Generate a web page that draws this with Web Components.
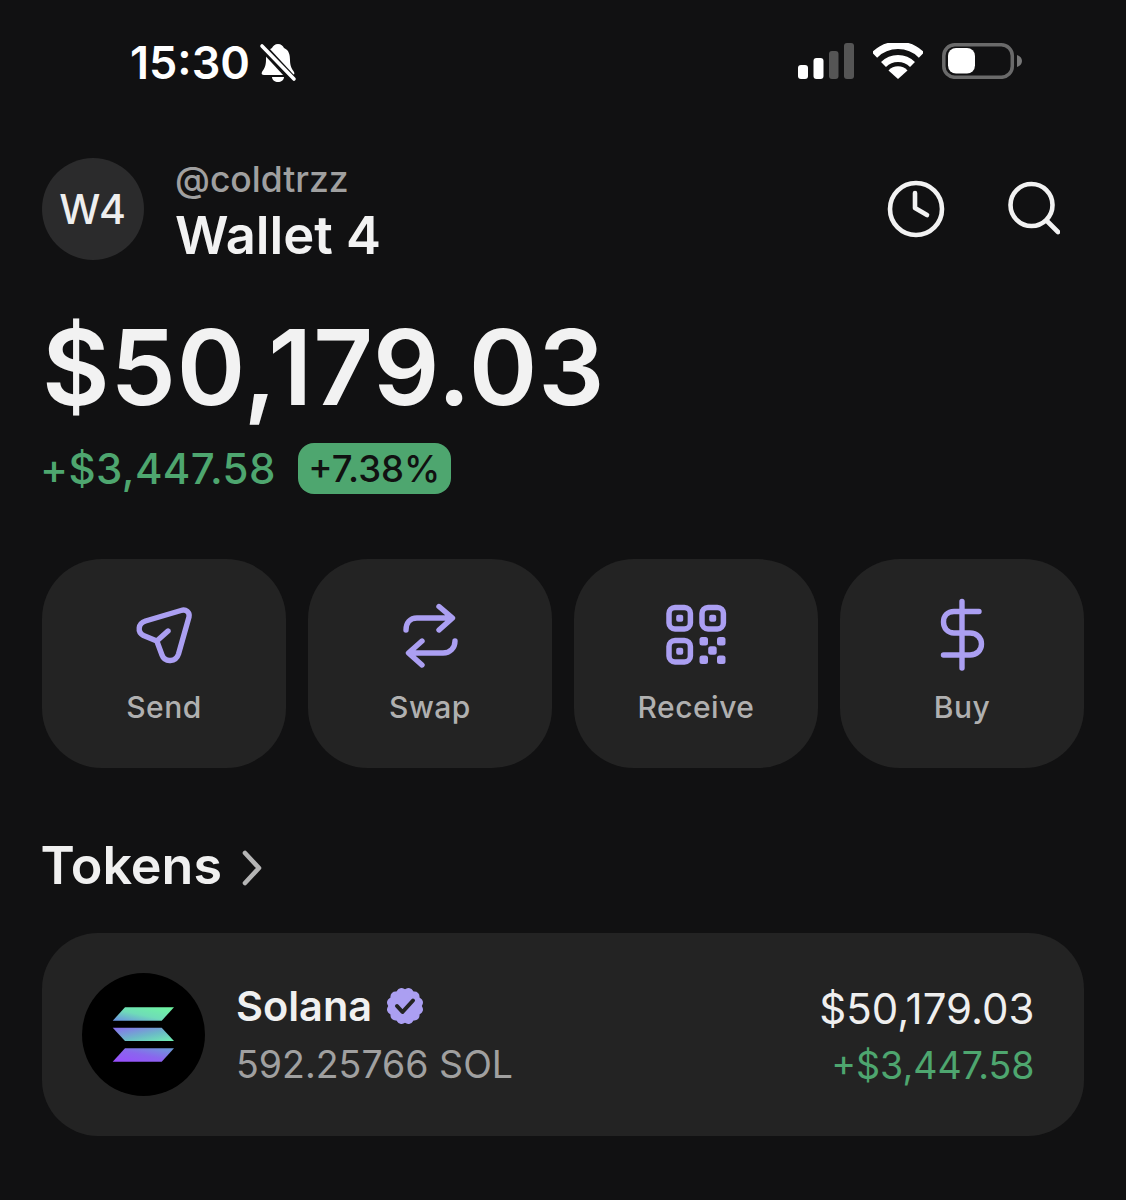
<!doctype html>
<html lang="en"><head><meta charset="utf-8"><title>Wallet 4</title>
<style>
html,body{margin:0;padding:0;background:#111112;}
body{font-family:Inter,"Liberation Sans",sans-serif;color:#f0f0f0;font-optical-sizing:none;font-variation-settings:"opsz" 14;}
wallet-app{height:1200px;}
</style></head><body>
<wallet-app>
  <status-bar></status-bar>
  <wallet-header handle="@coldtrzz" name="Wallet 4" initials="W4"></wallet-header>
  <balance-block amount="$50,179.03" change="+$3,447.58" pct="+7.38%"></balance-block>
  <action-row>
    <action-button label="Send" icon="send"></action-button>
    <action-button label="Swap" icon="swap"></action-button>
    <action-button label="Receive" icon="qr"></action-button>
    <action-button label="Buy" icon="dollar"></action-button>
  </action-row>
  <section-title>Tokens</section-title>
  <token-card name="Solana" qty="592.25766 SOL" value="$50,179.03" change="+$3,447.58"></token-card>
</wallet-app>
<script>
const def=(n,css,html,extra)=>customElements.define(n,class extends HTMLElement{
  constructor(){super();this.attachShadow({mode:'open'});}
  connectedCallback(){const a=k=>this.getAttribute(k)||'';this.shadowRoot.innerHTML='<style>'+css+'</style>'+html(a);}
});
def('wallet-app',':host{display:block;padding:0 42px;box-sizing:border-box;width:1126px}',()=>'<slot></slot>');

def('status-bar',`:host{display:flex;align-items:center;justify-content:space-between;height:39px;margin:43px 62px 0 88px;color:#fff}
.l{display:flex;align-items:center;gap:9px}.t{font-size:45px;font-weight:600;line-height:39px}
.r{display:flex;align-items:center;gap:19px;align-self:flex-start}svg{display:block}`,()=>`
<div class="l"><span class="t">15:30</span>
<svg width="38" height="40" viewBox="0 0 38 40"><path d="M19 1c3 0 5 2 6 4 5 2 6 7 6 12 0 6 2 9 4 12 1 2 0 3-2 3H5c-2 0-3-1-2-3 2-3 4-6 4-12 0-5 1-10 6-12 1-2 3-4 6-4z" fill="#fff"/><path d="M13 34h12c0 3-3 5-6 5s-6-2-6-5z" fill="#fff"/><path d="M-1 -1 36 39" stroke="#111112" stroke-width="8"/><path d="M3 3 35 36" stroke="#fff" stroke-width="3.6" stroke-linecap="round"/></svg></div>
<div class="r">
<svg width="56" height="36" viewBox="0 0 56 36"><rect x="0" y="22" width="10" height="14" rx="3" fill="#fff"/><rect x="15.500" y="15" width="10" height="21" rx="3" fill="#fff"/><rect x="31" y="8" width="9.500" height="28" rx="3" fill="#555"/><rect x="46" y="0" width="10" height="36" rx="3" fill="#555"/></svg>
<svg width="50" height="36" viewBox="-25 -36 50 36"><path d="M-23.500 -24A33.500 33.500 0 0 1 23.500 -24" fill="none" stroke="#fff" stroke-width="7.500"/><path d="M-14.500 -14.500A20.500 20.500 0 0 1 14.500 -14.500" fill="none" stroke="#fff" stroke-width="7"/><path d="M0 0-9.500 -8.500A13 13 0 0 1 9.500 -8.500Z" fill="#fff"/></svg>
<svg width="80" height="36" viewBox="0 0 80 36"><rect x="1.800" y="1.800" width="68.500" height="32.500" rx="11" fill="none" stroke="#6a6a6a" stroke-width="3.500"/><rect x="6" y="5" width="27" height="25.500" rx="8" fill="#fff"/><path d="M75 12c3 1 5 3 5 6s-2 5-5 6z" fill="#777"/></svg>
</div>`);

def('wallet-header',`:host{display:flex;align-items:center;margin-top:76px;height:102px}
.av{width:102px;height:102px;border-radius:50%;background:#2b2b2c;display:flex;align-items:center;justify-content:center;font-size:41px;font-weight:500;color:#eee;padding-right:1px;box-sizing:border-box}
.who{margin-left:31px;display:flex;flex-direction:column;padding-top:4px}
.h{font-size:35.500px;line-height:44px;color:#a0a0a0;font-weight:500;height:44px}
.n{font-size:52.500px;line-height:60px;font-weight:600;color:#f2f2f2;margin-top:3px}
.ic{margin-left:auto;display:flex;align-items:center;gap:59.500px;margin-right:24.500px}svg{display:block}`,a=>`
<div class="av">${a('initials')}</div>
<div class="who"><span class="h">${a('handle')}</span><span class="n">${a('name')}</span></div>
<div class="ic">
<svg width="60" height="60" viewBox="0 0 60 60" fill="none" stroke="#f2f2f2" stroke-width="4.600" stroke-linecap="round" stroke-linejoin="round"><circle cx="30" cy="30" r="26"/><path d="M29 14V29L41 36"/></svg>
<svg width="54" height="56" viewBox="0 0 54 56" fill="none" stroke="#f2f2f2" stroke-width="4.600" stroke-linecap="round"><circle cx="25.500" cy="24" r="21"/><path d="M41 40 52 51"/></svg>
</div>`);

def('balance-block',`:host{display:block;margin-top:46px}
.a{font-size:104px;line-height:122px;font-weight:600;color:#f2f2f2;height:122px;letter-spacing:.9px}
.row{display:flex;align-items:center;margin-top:15px;height:51px}
.c{font-size:42px;font-weight:500;color:#4ea66f;margin-left:-2px;letter-spacing:.4px}
.p{margin-left:22px;background:#4ea66f;color:#111;border-radius:16px;height:51px;width:153px;display:flex;align-items:center;justify-content:center;font-size:36.500px;font-weight:500}`,a=>`
<div class="a">${a('amount')}</div>
<div class="row"><span class="c">${a('change')}</span><span class="p">${a('pct')}</span></div>`);

def('action-row',':host{display:grid;grid-template-columns:repeat(4,244px);gap:22px;margin-top:65px}',()=>'<slot></slot>');

const icons={
send:`<svg width="60" height="60" viewBox="0 0 60 60" fill="none" stroke="#ab9ff2" stroke-width="5.400" stroke-linecap="round" stroke-linejoin="round" style="margin-top:-2px"><path d="M11.500 17 47 6.500C52 5 56 8 55 13L44.500 50C42 58 31 59 28 51L22.800 37 9.500 31.500C3 28 4 19.500 11.500 17Z"/><path d="M22.800 37 34 27"/></svg>`,
swap:`<svg width="60" height="70" viewBox="0 0 60 70" fill="none" stroke="#ab9ff2" stroke-width="5.400" stroke-linecap="round" stroke-linejoin="round"><path d="M6 30C6 23 10 18 17 18H52M39 6.500 52.500 18 39 30"/><path d="M55 41C55 48 50 53 43 53H9M22 41 8.500 53 22 65"/></svg>`,
qr:`<svg width="64" height="64" viewBox="0 0 64 64" fill="none" stroke="#ab9ff2" stroke-width="5.500"><rect x="5" y="4.500" width="21.400" height="21.400" rx="6"/><rect x="38" y="4.500" width="21.400" height="21.400" rx="6"/><rect x="5" y="37.500" width="21.400" height="21.400" rx="6"/><g fill="#ab9ff2" stroke="none"><rect x="12.200" y="11.700" width="7" height="7" rx="2"/><rect x="45.200" y="11.700" width="7" height="7" rx="2"/><rect x="12.200" y="44.700" width="7" height="7" rx="2"/><rect x="35.500" y="34" width="8.500" height="8.500" rx="2.500"/><rect x="53" y="34" width="8.500" height="8.500" rx="2.500"/><rect x="44.200" y="43.300" width="8.500" height="8.500" rx="2.500"/><rect x="35.500" y="52.500" width="8.500" height="8.500" rx="2.500"/><rect x="53" y="52.500" width="8.500" height="8.500" rx="2.500"/></g></svg>`,
dollar:`<svg width="56" height="78" viewBox="0 0 56 78" fill="none" stroke="#ab9ff2" stroke-width="5.400" stroke-linecap="round" stroke-linejoin="round"><path d="M45 15.500H20C13.500 15.500 9.500 20 9.500 26S13.500 37 20 37H36C43 37 47.500 42 47.500 48S43 59 36 59H9.500"/><path d="M28 5.500V72"/></svg>`};
def('action-button',`:host{display:flex;flex-direction:column;align-items:center;height:209px;background:#232323;border-radius:60px;box-sizing:border-box;padding-top:38px}
.i{height:76px;display:flex;align-items:center;justify-content:center}svg{display:block}
.l{margin-top:16px;font-size:30px;line-height:36px;font-weight:500;color:#b0b0b0;letter-spacing:.5px}`,a=>`
<div class="i">${icons[a('icon')]}</div><div class="l">${a('label')}</div>`);

def('section-title',`:host{display:flex;align-items:center;margin-top:67px;height:62px;font-size:52px;line-height:62px;font-weight:600;color:#f0f0f0;margin-left:-1.500px}
svg{display:block;margin:4px 0 0 20px}`,()=>`<slot></slot><svg width="20" height="36" viewBox="0 0 20 36" fill="none" stroke="#b5b5b5" stroke-width="4.600" stroke-linecap="round" stroke-linejoin="round"><path d="M3 3 17 18 3 33"/></svg>`);

def('token-card',`:host{display:flex;align-items:center;margin-top:36px;height:203px;background:#232323;border-radius:56px;padding:0 49.500px 0 40px;box-sizing:border-box}
svg{display:block;flex:none}
.m{margin-left:31px;display:flex;flex-direction:column;padding-top:4px}
.n{display:flex;align-items:center;gap:14px;font-size:41.500px;line-height:56px;font-weight:600;color:#f0f0f0}
.q{font-size:37.500px;line-height:62px;color:#a0a0a0}
.r{margin-left:auto;display:flex;flex-direction:column;align-items:flex-end;padding-top:6px}
.v{font-size:42px;line-height:56px;color:#efefef}
.c{font-size:37.500px;line-height:58px;color:#4ea66f;font-weight:400}`,a=>`
<svg width="123" height="123" viewBox="82 973 123 123"><defs>
<linearGradient id="g1" x1="0" y1="1" x2="1" y2="0"><stop offset="0" stop-color="#6a8fe2"/><stop offset=".45" stop-color="#6fdcb8"/><stop offset="1" stop-color="#6ff7a0"/></linearGradient>
<linearGradient id="g2" x1="0" y1="0" x2="1" y2="1"><stop offset="0" stop-color="#8a6af0"/><stop offset=".55" stop-color="#6cb8c8"/><stop offset="1" stop-color="#6ff0b0"/></linearGradient>
<linearGradient id="g3" x1="0" y1="1" x2="1" y2="0"><stop offset="0" stop-color="#9a4dff"/><stop offset=".5" stop-color="#8a66ee"/><stop offset="1" stop-color="#6a9fd8"/></linearGradient>
</defs><circle cx="143.500" cy="1034.500" r="61.500" fill="#000"/><path fill="url(#g1)" d="M125 1007.300H174L161.700 1020.700H112.700Z"/><path fill="url(#g2)" d="M112.700 1027.700H161.700L174 1041H125Z"/><path fill="url(#g3)" d="M125 1048.300H174L161.700 1061.700H112.700Z"/></svg>
<div class="m"><div class="n">${a('name')}<svg width="38" height="38" viewBox="-19 -19 38 38"><g fill="#ab9ff2"><rect x="-14.500" y="-14.500" width="29" height="29" rx="5"/><rect x="-14.500" y="-14.500" width="29" height="29" rx="5" transform="rotate(30)"/><rect x="-14.500" y="-14.500" width="29" height="29" rx="5" transform="rotate(60)"/></g><path d="M-8 0-2.500 6 8-5.500" fill="none" stroke="#232323" stroke-width="4" stroke-linecap="round" stroke-linejoin="round"/></svg></div><div class="q">${a('qty')}</div></div>
<div class="r"><div class="v">${a('value')}</div><div class="c">${a('change')}</div></div>`);
</script>
</body></html>
